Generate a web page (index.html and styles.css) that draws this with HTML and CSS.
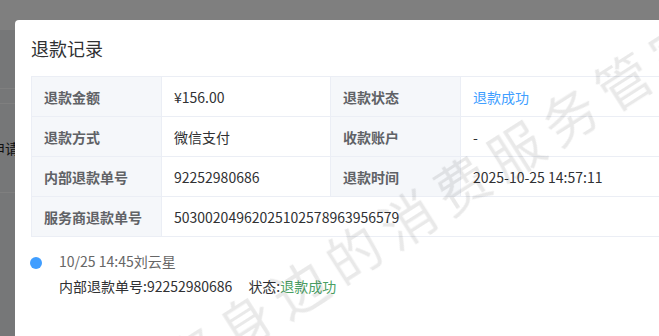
FILE: index.html
```html
<!DOCTYPE html>
<html lang="zh-CN">
<head>
<meta charset="utf-8">
<title>退款记录</title>
<link rel="stylesheet" href="styles.css">
</head>
<body>
<div class="page">
  <div class="page-top"></div>
  <div class="page-section page-section-a"></div>
  <div class="page-section page-section-b"></div>
  <div class="page-section page-section-c"><span class="page-text">退款申请</span></div>
  <div class="page-section page-section-d"></div>
</div>
<div class="mask"></div>
<div class="dialog">
  <div class="dialog-header"><span class="dialog-title">退款记录</span></div>
  <div class="dialog-body">
    <div class="desc">
      <div class="cell label">退款金额</div>
      <div class="cell value">¥156.00</div>
      <div class="cell label">退款状态</div>
      <div class="cell value blue">退款成功</div>

      <div class="cell label">退款方式</div>
      <div class="cell value">微信支付</div>
      <div class="cell label">收款账户</div>
      <div class="cell value">-</div>

      <div class="cell label">内部退款单号</div>
      <div class="cell value">92252980686</div>
      <div class="cell label">退款时间</div>
      <div class="cell value">2025-10-25 14:57:11</div>

      <div class="cell label">服务商退款单号</div>
      <div class="cell value span3">50300204962025102578963956579</div>
    </div>
    <ul class="timeline">
      <li class="tl-item">
        <span class="tl-dot"></span>
        <div class="tl-content">
          <div class="tl-time">10/25 14:45刘云星</div>
          <div class="tl-text">内部退款单号:92252980686<span class="tl-status">状态:<span class="green">退款成功</span></span></div>
        </div>
      </li>
    </ul>
  </div>
  <div class="watermark">您身边的消费服务管家</div>
</div>
</body>
</html>
```

FILE: styles.css
```css
* { box-sizing: border-box; }
html, body { margin: 0; padding: 0; }
body {
  width: 659px;
  height: 336px;
  overflow: hidden;
  font-family: "Noto Sans CJK SC", "Microsoft YaHei", sans-serif;
  font-size: 14px;
  background: #ffffff;
}

/* underlying page (only a sliver visible) */
.page { display: flex; flex-direction: column; height: 336px; }
.page-top { height: 30px; background: #ffffff; }
.page-section { background: #eceef1; border-bottom: 1px solid #ffffff; }
.page-section-a { height: 59px; }
.page-section-b { height: 15px; }
.page-section-c { height: 89px; display: flex; align-items: center; }
.page-section-d { flex: 1; border-bottom: 0; }
.page-text { margin-left: -37px; color: #222; font-size: 14px; line-height: 20px; }

.mask { position: fixed; inset: 0; background: rgba(0, 0, 0, 0.5); }

/* dialog */
.dialog {
  position: fixed;
  left: 15px;
  top: 20px;
  width: 800px;
  height: 420px;
  background: #ffffff;
  border-radius: 4px;
  overflow: hidden;
  padding: 16px;
}
.dialog-header { height: 24px; display: flex; align-items: center; }
.dialog-title { font-size: 18px; line-height: 24px; color: #303133; }
.dialog-body { margin-top: 16px; }

.desc {
  display: grid;
  grid-template-columns: 129px 168px 129px 1fr;
  gap: 1px;
  background: #ebeef5;
  border: 1px solid #ebeef5;
}
.cell {
  height: 39px;
  padding: 0 12px;
  display: flex;
  align-items: center;
  font-size: 14px;
  white-space: nowrap;
}
.label { background: #f5f7fa; color: #606266; font-weight: 700; }
.value { background: #ffffff; color: #303133; }
.blue { color: #409eff; }
.span3 { grid-column: span 3; }

.timeline { list-style: none; margin: 13px 0 0; padding: 0; }
.tl-item { display: flex; align-items: flex-start; }
.tl-dot {
  flex: none;
  width: 12px;
  height: 12px;
  border-radius: 50%;
  background: #409eff;
  margin: 7px 0 0 -1px;
}
.tl-content { margin-left: 17px; }
.tl-time { font-size: 14px; line-height: 22px; color: #666666; }
.tl-text { margin-top: 3px; font-size: 14px; line-height: 22px; color: #303133; }
.tl-status { margin-left: 16px; }
.green { color: #4a9f63; }

.watermark {
  position: absolute;
  left: 153px;
  top: 323px;
  height: 54px;
  font-size: 54px;
  line-height: 54px;
  letter-spacing: 10px;
  white-space: nowrap;
  color: rgba(0, 0, 0, 0.085);
  transform-origin: 0 50%;
  transform: rotate(-32.5deg);
  pointer-events: none;
}
```
